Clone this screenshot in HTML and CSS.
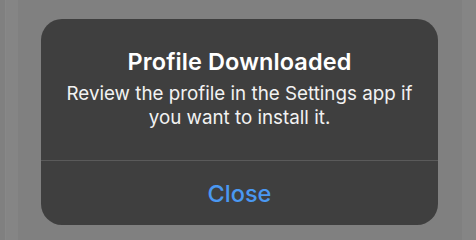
FILE: index.html
```html
<!DOCTYPE html>
<html>
<head>
<meta charset="utf-8">
<link rel="stylesheet" href="styles.css">
</head>
<body>
<div class="screen">
  <div class="edge-left"></div>
  <div class="center">
    <div class="alert">
      <div class="content">
        <div class="title">Profile Downloaded</div>
        <div class="message">Review the profile in the Settings app if you want to install it.</div>
      </div>
      <div class="actions">
        <div class="button">Close</div>
      </div>
    </div>
  </div>
  <div class="edge-right"></div>
</div>
</body>
</html>
```
FILE: styles.css
```css
html, body {
  margin: 0;
  padding: 0;
  width: 476px;
  height: 240px;
  overflow: hidden;
  background: #808080;
}
.screen {
  display: flex;
  width: 476px;
  height: 240px;
}
.edge-left {
  width: 12px;
  margin-left: 5px;
  background: #858585;
  border-left: 1px solid #888;
}
.edge-right {
  width: 14px;
  background: #858585;
}
.center {
  flex: 1;
  padding: 19px 0 0 23px;
}
.alert {
  width: 397px;
  height: 206px;
  background: #3f3f3f;
  border-radius: 21px;
  display: flex;
  flex-direction: column;
  font-family: Inter, "Noto Sans", sans-serif;
  color: #fff;
  text-align: center;
}
.content {
  height: 142px;
  padding: 28px 18px 0;
  box-sizing: border-box;
  border-bottom: 1px solid #5a5a5a;
}
.title {
  font-size: 23.5px;
  font-weight: 600;
  line-height: 30px;
  letter-spacing: 0.1px;
}
.message {
  margin-top: 5px;
  font-size: 18.8px;
  line-height: 24px;
  color: #f2f2f2;
}
.actions {
  flex: 1;
  display: flex;
  align-items: center;
  justify-content: center;
}
.button {
  color: #4a98f2;
  font-size: 23.5px;
  font-weight: 500;
  margin-top: 1px;
}
```
